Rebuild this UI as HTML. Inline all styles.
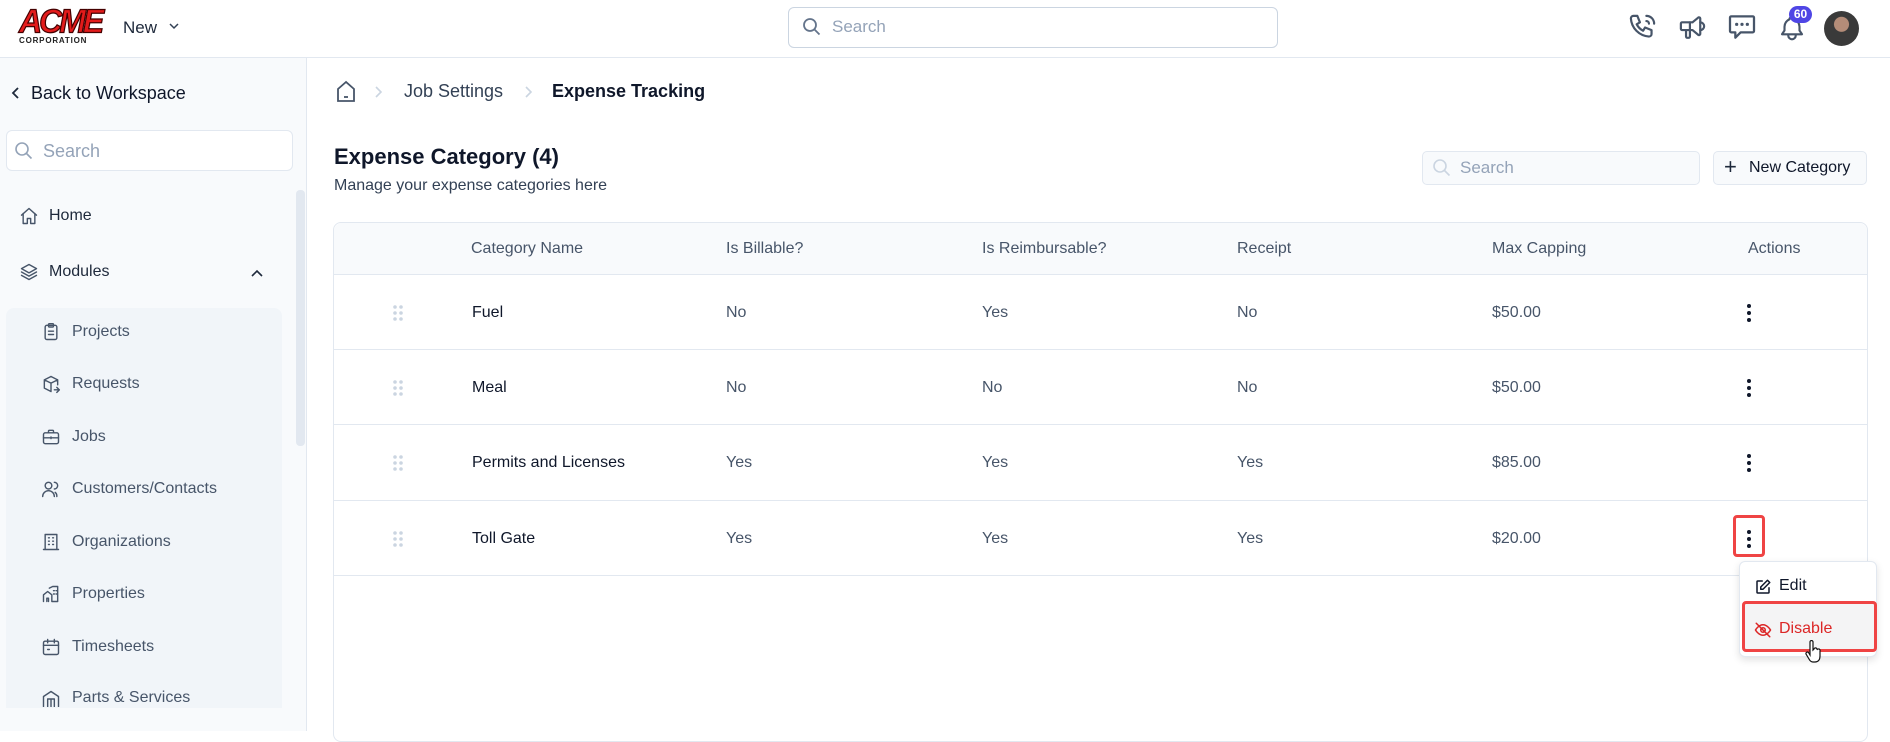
<!DOCTYPE html>
<html><head><meta charset="utf-8">
<style>
*{box-sizing:border-box;margin:0;padding:0}
body{width:1890px;height:731px;overflow:hidden;background:#fff;font-family:"Liberation Sans",sans-serif;color:#1e293b;position:relative}
.a{position:absolute}
.hdr{left:0;top:0;width:1890px;height:58px;border-bottom:1px solid #e2e8f0;background:#fff}
.side{left:0;top:58px;width:307px;height:673px;background:#f8fafc;border-right:1px solid #e2e8f0}
.it{font-size:16px;color:#475569;display:flex;align-items:center;gap:11px}
.ic{width:20px;height:20px;fill:none;stroke:#475569;stroke-width:1.7;stroke-linecap:round;stroke-linejoin:round}
.th{font-size:16px;color:#475569;top:240px}
.td{font-size:16px;color:#475569}
.hl{left:334px;width:1533px;height:1px;background:#e2e8f0}
</style></head><body>
<div class="a hdr"></div>
<div class="a" style="left:19px;top:6px;width:80px;height:40px">
 <div style="font:italic 900 32px/30px 'Liberation Sans',sans-serif;color:#e31b1b;letter-spacing:-3px;-webkit-text-stroke:1.2px #400;transform:scaleY(1.05)">ACME</div>
 <div style="font:bold 8px/8px 'Liberation Sans',sans-serif;color:#222;letter-spacing:0.8px;margin-top:1px">CORPORATION</div>
</div>
<div class="a" style="left:123px;top:18px;font-size:17px;color:#1e293b">New</div>
<svg class="a" style="left:168px;top:21px" width="12" height="10" viewBox="0 0 12 10"><path d="M2 3l4 4 4-4" stroke="#334155" stroke-width="1.5" fill="none"/></svg>
<div class="a" style="left:788px;top:7px;width:490px;height:41px;border:1px solid #cbd5e1;border-radius:6px"></div>
<svg class="a" style="left:802px;top:17px" width="20" height="20" viewBox="0 0 20 20"><circle cx="8" cy="8" r="6" stroke="#64748b" stroke-width="1.8" fill="none"/><path d="M12.5 12.5l5 5" stroke="#64748b" stroke-width="1.8"/></svg>
<div class="a" style="left:832px;top:17px;font-size:17px;color:#94a3b8">Search</div>
<svg class="a" style="left:1627px;top:12px" width="31" height="31" viewBox="0 0 24 24" fill="none" stroke="#475569" stroke-width="1.7" stroke-linecap="round" stroke-linejoin="round"><path d="M5 3h3l2 5-2.5 1.5a11 11 0 005 5L14 12l5 2v3a2 2 0 01-2 2A15 15 0 013 5a2 2 0 012-2"/><path d="M15 3a6 6 0 016 6M15 7a2 2 0 012 2"/></svg>
<svg class="a" style="left:1677px;top:12px" width="31" height="31" viewBox="0 0 24 24" fill="none" stroke="#475569" stroke-width="1.7" stroke-linecap="round" stroke-linejoin="round"><path d="M18 8a3 3 0 010 6M10 8v11a1 1 0 01-1 1H8a1 1 0 01-1-1v-5"/><path d="M12 8l4.6-3.8A1 1 0 0118 5v12a1 1 0 01-1.4.8L12 14H4a1 1 0 01-1-1V9a1 1 0 011-1h8"/></svg>
<svg class="a" style="left:1726px;top:11px" width="32" height="32" viewBox="0 0 24 24" fill="none" stroke="#475569" stroke-width="1.7" stroke-linecap="round" stroke-linejoin="round"><path d="M4 4h16a1 1 0 011 1v10a1 1 0 01-1 1h-9l-4 4v-4H4a1 1 0 01-1-1V5a1 1 0 011-1z"/><path d="M8 10h.01M12 10h.01M16 10h.01" stroke-width="2.4"/></svg>
<svg class="a" style="left:1777px;top:13px" width="30" height="30" viewBox="0 0 24 24" fill="none" stroke="#475569" stroke-width="1.7" stroke-linecap="round" stroke-linejoin="round"><path d="M10 5a2 2 0 014 0 7 7 0 014 6v3l2 3H4l2-3v-3a7 7 0 014-6M9 17v1a3 3 0 006 0v-1"/></svg>
<div class="a" style="left:1789px;top:6px;width:23px;height:17px;border-radius:9px;background:#4f46e5;color:#fff;font-size:12px;font-weight:bold;text-align:center;line-height:17px">60</div>
<div class="a" style="left:1824px;top:11px;width:35px;height:35px;border-radius:50%;background:radial-gradient(circle at 50% 38%,#b48c78 0 26%,#3a3a3a 28% 100%)"></div>
<div class="a side"></div>
<svg class="a" style="left:10px;top:86px" width="12" height="14" viewBox="0 0 12 14"><path d="M8 2L3 7l5 5" stroke="#1e293b" stroke-width="1.8" fill="none"/></svg>
<div class="a" style="left:31px;top:83px;font-size:18px;color:#0f172a">Back to Workspace</div>
<div class="a" style="left:6px;top:130px;width:287px;height:41px;border:1px solid #e2e8f0;border-radius:6px;background:#fff"></div>
<svg class="a" style="left:14px;top:141px" width="20" height="20" viewBox="0 0 20 20"><circle cx="8" cy="8" r="6" stroke="#94a3b8" stroke-width="1.6" fill="none"/><path d="M12.5 12.5l5 5" stroke="#94a3b8" stroke-width="1.6"/></svg>
<div class="a" style="left:43px;top:141px;font-size:18px;color:#94a3b8">Search</div>
<div class="a it" style="left:19px;top:206px;color:#1e293b;gap:10px"><svg class="ic" viewBox="0 0 24 24"><path d="M3 11l9-8 9 8M5 9v12h5v-6h4v6h5V9"/></svg>Home</div>
<div class="a it" style="left:19px;top:262px;color:#1e293b;gap:10px"><svg class="ic" viewBox="0 0 24 24"><path d="M12 3l9 5-9 5-9-5 9-5zM3 12l9 5 9-5M3 16l9 5 9-5"/></svg>Modules</div>
<svg class="a" style="left:250px;top:268px" width="14" height="10" viewBox="0 0 14 10"><path d="M2 8l5-5 5 5" stroke="#1e293b" stroke-width="1.6" fill="none"/></svg>
<div class="a" style="left:6px;top:308px;width:276px;height:400px;background:#f1f5f9;border-radius:8px 8px 0 0"></div>
<div class="a" style="left:296px;top:190px;width:9px;height:256px;background:#e2e8f0;border-radius:4px"></div>
<div class="a it" style="left:41px;top:322px"><svg class="ic" viewBox="0 0 24 24"><rect x="5" y="4" width="14" height="17" rx="2"/><rect x="9" y="2" width="6" height="4" rx="1"/><path d="M9 11h6M9 15h6"/></svg>Projects</div>
<div class="a it" style="left:41px;top:374px"><svg class="ic" viewBox="0 0 24 24"><path d="M12 3l8 4v6M12 3L4 7v10l8 4M4 7l8 4 8-4M12 11v10M16 19h6M19 16l3 3-3 3"/></svg>Requests</div>
<div class="a it" style="left:41px;top:427px"><svg class="ic" viewBox="0 0 24 24"><rect x="3" y="7" width="18" height="13" rx="2"/><path d="M9 7V5a1 1 0 011-1h4a1 1 0 011 1v2M3 13h18M12 12v2"/></svg>Jobs</div>
<div class="a it" style="left:41px;top:479px"><svg class="ic" viewBox="0 0 24 24"><circle cx="9" cy="8" r="4"/><path d="M2 21a7 7 0 0114 0M16 4a4 4 0 010 8M19 21a6 6 0 00-2-5"/></svg>Customers/Contacts</div>
<div class="a it" style="left:41px;top:532px"><svg class="ic" viewBox="0 0 24 24"><path d="M5 21V3h14v18M3 21h18M9 7h1M14 7h1M9 11h1M14 11h1M9 15h1M14 15h1"/></svg>Organizations</div>
<div class="a it" style="left:41px;top:584px"><svg class="ic" viewBox="0 0 24 24"><path d="M3 21V13l5-4 5 4v8M10 5l4-2h6v18h-7M15 8h1M18 8h1M15 12h1M18 12h1M7 21v-4h2v4"/></svg>Properties</div>
<div class="a it" style="left:41px;top:637px"><svg class="ic" viewBox="0 0 24 24"><rect x="3" y="5" width="18" height="16" rx="2"/><path d="M3 10h18M8 3v4M16 3v4M8 15h2"/></svg>Timesheets</div>
<div class="a it" style="left:41px;top:689px;height:18px;overflow:hidden;align-items:flex-start"><svg class="ic" viewBox="0 0 24 24"><path d="M3 21V9l9-6 9 6v12M8 21v-9h8v9M12 12v9"/></svg>Parts &amp; Services</div>
<svg class="a" style="left:334px;top:79px" width="24" height="26" viewBox="0 0 24 26" fill="none" stroke="#475569" stroke-width="1.8"><path d="M12 3L4 10v12h16V10z"/><path d="M10 18h4"/></svg>
<svg class="a" style="left:373px;top:85px" width="10" height="14" viewBox="0 0 10 14"><path d="M3 2l5 5-5 5" stroke="#cbd5e1" stroke-width="1.6" fill="none"/></svg>
<div class="a" style="left:404px;top:81px;font-size:18px;color:#334155">Job Settings</div>
<svg class="a" style="left:523px;top:85px" width="10" height="14" viewBox="0 0 10 14"><path d="M3 2l5 5-5 5" stroke="#cbd5e1" stroke-width="1.6" fill="none"/></svg>
<div class="a" style="left:552px;top:81px;font-size:18px;color:#0f172a;font-weight:bold">Expense Tracking</div>
<div class="a" style="left:334px;top:144px;font-size:22px;color:#0f172a;font-weight:bold">Expense Category (4)</div>
<div class="a" style="left:334px;top:177px;font-size:16px;color:#334155">Manage your expense categories here</div>
<div class="a" style="left:1422px;top:151px;width:278px;height:34px;border:1px solid #e2e8f0;border-radius:5px;background:#f8fafc"></div>
<svg class="a" style="left:1432px;top:158px" width="20" height="20" viewBox="0 0 20 20"><circle cx="8" cy="8" r="6" stroke="#cbd5e1" stroke-width="1.6" fill="none"/><path d="M12.5 12.5l5 5" stroke="#cbd5e1" stroke-width="1.6"/></svg>
<div class="a" style="left:1460px;top:158px;font-size:17px;color:#94a3b8">Search</div>
<div class="a" style="left:1713px;top:151px;width:154px;height:34px;border:1px solid #e2e8f0;border-radius:5px;background:#f8fafc"></div>
<div class="a" style="left:1724px;top:154px;font-size:22px;color:#1e293b">+</div>
<div class="a" style="left:1749px;top:159px;font-size:16px;color:#0f172a">New Category</div>
<div class="a" style="left:333px;top:222px;width:1535px;height:520px;border:1px solid #e2e8f0;border-radius:8px"></div>
<div class="a" style="left:334px;top:223px;width:1533px;height:52px;background:#f8fafc;border-radius:8px 8px 0 0;border-bottom:1px solid #e2e8f0"></div>
<div class="a th" style="left:471px">Category Name</div>
<div class="a th" style="left:726px">Is Billable?</div>
<div class="a th" style="left:982px">Is Reimbursable?</div>
<div class="a th" style="left:1237px">Receipt</div>
<div class="a th" style="left:1492px">Max Capping</div>
<div class="a th" style="left:1748px">Actions</div>
<div class="a hl" style="top:349px"></div>
<div class="a hl" style="top:424px"></div>
<div class="a hl" style="top:500px"></div>
<div class="a hl" style="top:575px"></div>
<svg width="0" height="0" style="position:absolute"><defs><g id="dr"><circle cx="2" cy="2" r="1.8"/><circle cx="8" cy="2" r="1.8"/><circle cx="2" cy="8" r="1.8"/><circle cx="8" cy="8" r="1.8"/><circle cx="2" cy="14" r="1.8"/><circle cx="8" cy="14" r="1.8"/></g><g id="kb"><circle cx="3" cy="3" r="2"/><circle cx="3" cy="10" r="2"/><circle cx="3" cy="17" r="2"/></g></defs></svg>
<svg class="a" style="left:393px;top:305px" width="10" height="16" fill="#cbd5e1"><use href="#dr"/></svg>
<div class="a td" style="left:472px;top:304px;color:#0f172a">Fuel</div>
<div class="a td" style="left:726px;top:304px">No</div><div class="a td" style="left:982px;top:304px">Yes</div><div class="a td" style="left:1237px;top:304px">No</div><div class="a td" style="left:1492px;top:304px">$50.00</div>
<svg class="a" style="left:1746px;top:303px" width="6" height="20" fill="#0f172a"><use href="#kb"/></svg>
<svg class="a" style="left:393px;top:380px" width="10" height="16" fill="#cbd5e1"><use href="#dr"/></svg>
<div class="a td" style="left:472px;top:379px;color:#0f172a">Meal</div>
<div class="a td" style="left:726px;top:379px">No</div><div class="a td" style="left:982px;top:379px">No</div><div class="a td" style="left:1237px;top:379px">No</div><div class="a td" style="left:1492px;top:379px">$50.00</div>
<svg class="a" style="left:1746px;top:378px" width="6" height="20" fill="#0f172a"><use href="#kb"/></svg>
<svg class="a" style="left:393px;top:455px" width="10" height="16" fill="#cbd5e1"><use href="#dr"/></svg>
<div class="a td" style="left:472px;top:454px;color:#0f172a">Permits and Licenses</div>
<div class="a td" style="left:726px;top:454px">Yes</div><div class="a td" style="left:982px;top:454px">Yes</div><div class="a td" style="left:1237px;top:454px">Yes</div><div class="a td" style="left:1492px;top:454px">$85.00</div>
<svg class="a" style="left:1746px;top:453px" width="6" height="20" fill="#0f172a"><use href="#kb"/></svg>
<svg class="a" style="left:393px;top:531px" width="10" height="16" fill="#cbd5e1"><use href="#dr"/></svg>
<div class="a td" style="left:472px;top:530px;color:#0f172a">Toll Gate</div>
<div class="a td" style="left:726px;top:530px">Yes</div><div class="a td" style="left:982px;top:530px">Yes</div><div class="a td" style="left:1237px;top:530px">Yes</div><div class="a td" style="left:1492px;top:530px">$20.00</div>
<svg class="a" style="left:1746px;top:529px" width="6" height="20" fill="#0f172a"><use href="#kb"/></svg>
<div class="a" style="left:1733px;top:515px;width:32px;height:42px;border:3px solid #ef4444;border-radius:4px"></div>
<div class="a" style="left:1739px;top:561px;width:138px;height:96px;background:#fff;border:1px solid #e2e8f0;border-radius:6px;box-shadow:0 3px 8px rgba(0,0,0,.12)"></div>
<svg class="a" style="left:1754px;top:578px" width="18" height="18" viewBox="0 0 24 24" fill="none" stroke="#0f172a" stroke-width="2" stroke-linecap="round" stroke-linejoin="round"><path d="M11 4H5a1 1 0 00-1 1v14a1 1 0 001 1h14a1 1 0 001-1v-6"/><path d="M18 3l3 3-9 9H9v-3z"/></svg>
<div class="a" style="left:1779px;top:577px;font-size:16px;color:#0f172a">Edit</div>
<div class="a" style="left:1742px;top:601px;width:135px;height:51px;border:3px solid #ef4444;border-radius:4px;background:#f4f4f5"></div>
<svg class="a" style="left:1754px;top:621px" width="18" height="18" viewBox="0 0 24 24" fill="none" stroke="#dc2626" stroke-width="2" stroke-linecap="round"><path d="M2 12s4-7 10-7 10 7 10 7-4 7-10 7S2 12 2 12z"/><circle cx="12" cy="12" r="3"/><path d="M3 3l18 18"/></svg>
<div class="a" style="left:1779px;top:620px;font-size:16px;color:#dc2626">Disable</div>
<svg class="a" style="left:1805px;top:640px" width="18" height="24" viewBox="0 0 18 24"><path d="M5 2a1.5 1.5 0 013 0v8l1-1a1.5 1.5 0 013 1 1.5 1.5 0 013 1v5c0 4-2 6-5 6H8c-2 0-3-1-4-3l-3-5a1.5 1.5 0 012.5-1.5L5 15z" fill="#fff" stroke="#111" stroke-width="1.2"/></svg>
</body></html>
